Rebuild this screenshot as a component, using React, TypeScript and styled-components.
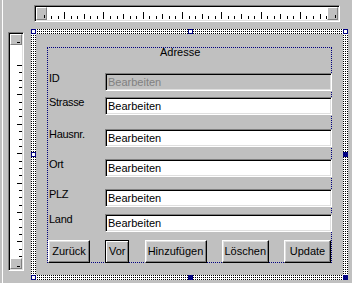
import styled, { createGlobalStyle } from "styled-components";

const GlobalStyle = createGlobalStyle`
  html, body {
    margin: 0;
    padding: 0;
    background: #c0c0c0;
  }
  body {
    font-family: "Liberation Sans", Arial, sans-serif;
    font-size: 11px;
    color: #000;
  }
`;

type Field = { label: string; value: string; top: number; disabled?: boolean };

const fields: Field[] = [
  { label: "ID", value: "Bearbeiten", top: 14, disabled: true },
  { label: "Strasse", value: "Bearbeiten", top: 6 },
  { label: "Hausnr.", value: "Bearbeiten", top: 14 },
  { label: "Ort", value: "Bearbeiten", top: 12 },
  { label: "PLZ", value: "Bearbeiten", top: 12 },
  { label: "Land", value: "Bearbeiten", top: 7 },
];

const buttons = [
  { label: "Zurück", width: 42 },
  { label: "Vor", width: 24, isDefault: true },
  { label: "Hinzufügen", width: 62 },
  { label: "Löschen", width: 47 },
  { label: "Update", width: 47 },
];

const Page = styled.div`
  width: 352px;
  height: 283px;
  overflow: hidden;
  background: linear-gradient(to right, #c0c0c0 2px, #fff 2px, #fff 3px, #c0c0c0 3px);
  display: grid;
  grid-template-columns: 31px 321px;
  grid-template-rows: 29px 254px;
`;

const Corner = styled.div``;

const Ruler = styled.div<{ vertical?: boolean }>`
  position: relative;
  background: #fff;
  border: 1px solid;
  border-color: #808080 #fff #fff #808080;
  box-shadow: inset 1px 1px 0 #000, inset -1px -1px 0 #dfdfdf;
  ${({ vertical }) =>
    vertical
      ? `margin: 3px 7px 0 8px; height: 239px;`
      : `margin: 5px 7px 7px 3px; width: 306px;`}
  box-sizing: border-box;
  overflow: hidden;
`;

const Ticks = styled.svg`
  display: block;
  width: 100%;
  height: 100%;
`;

const Thumb = styled.div<{ vertical?: boolean; end?: boolean }>`
  position: absolute;
  background: #c0c0c0;
  border: 1px solid;
  border-color: #fff #808080 #808080 #fff;
  box-sizing: border-box;
  ${({ vertical, end }) =>
    vertical
      ? `left: 1px; right: 1px; height: 11px; ${end ? "bottom: 1px;" : "top: 1px;"}`
      : `top: 1px; bottom: 1px; width: 11px; ${end ? "right: 1px;" : "left: 1px;"}`}
  &::after {
    content: "";
    position: absolute;
    background: #000;
    ${({ vertical }) =>
      vertical
        ? `right: 1px; bottom: 1px; width: 3px; height: 1px;`
        : `right: 1px; bottom: 1px; width: 1px; height: 3px;`}
  }
`;

const Frame = styled.div`
  position: relative;
  width: 317px;
  height: 251px;
  box-sizing: border-box;
  padding: 5px;
  background-color: #fff;
  background-image: conic-gradient(at 1px 1px, #fff 270deg, #000 0);
  background-size: 2px 2px;
`;

const Handle = styled.div<{ filled?: boolean; x: string; y: string }>`
  position: absolute;
  width: 5px;
  height: 5px;
  box-sizing: border-box;
  border: 1px solid #000080;
  background: ${({ filled }) => (filled ? "#000080" : "#fff")};
  ${({ x }) => x}
  ${({ y }) => y}
`;

const Surface = styled.div`
  height: 100%;
  background: #c0c0c0;
  padding: 13px 11px 12px 11px;
  box-sizing: border-box;
`;

const Section = styled.div`
  height: 216px;
  border: 1px dotted #000080;
  box-sizing: border-box;
  display: flex;
  flex-direction: column;
`;

const Title = styled.div`
  line-height: 13px;
  margin-top: -2px;
  padding-left: 112px;
`;

const Row = styled.div<{ top: number }>`
  display: grid;
  grid-template-columns: 57px 1fr;
  margin-top: ${({ top }) => top}px;
  margin-right: -1px;
  height: 18px;
`;

const Label = styled.div`
  line-height: 13px;
  margin-top: -1px;
  padding-left: 1px;
  letter-spacing: -0.3px;
`;

const TextBox = styled.div<{ disabled?: boolean }>`
  height: 18px;
  box-sizing: border-box;
  border: 1px solid;
  border-color: #808080 #fff #fff #808080;
  box-shadow: inset 1px 1px 0 #000, inset -1px -1px 0 #dfdfdf;
  background: ${({ disabled }) => (disabled ? "#c0c0c0" : "#fff")};
  color: ${({ disabled }) => (disabled ? "#808080" : "#000")};
  padding: 2px 2px 0 2px;
  line-height: 13px;
  white-space: nowrap;
  overflow: hidden;
`;

const ButtonBar = styled.div`
  display: flex;
  justify-content: space-between;
  margin-top: 8px;
  margin-bottom: -1px;
`;

const Button = styled.div<{ w: number; isDefault?: boolean }>`
  position: relative;
  width: ${({ w }) => w}px;
  height: 23px;
  box-sizing: border-box;
  border: 1px solid;
  border-color: ${({ isDefault }) => (isDefault ? "#000" : "#fff #000 #000 #fff")};
  box-shadow: ${({ isDefault }) =>
    isDefault
      ? "inset 1px 1px 0 #fff, inset -1px -1px 0 #808080"
      : "inset -1px -1px 0 #808080, inset 1px 1px 0 #dfdfdf"};
  background: #c0c0c0;
  display: flex;
  align-items: center;
  justify-content: center;
  line-height: 13px;
  white-space: nowrap;
`;

const hTicks = () => {
  const out = [];
  for (let n = 27; n >= -17; n--) {
    const x = 221.3 - 6.55 * n - 35;
    const major = n % 6 === 0;
    const mid = !major && n % 3 === 0;
    const h = major ? 7 : mid ? 5 : 3;
    out.push(<rect key={n} x={Math.round(x)} y={13 - h} width={1} height={h} fill="#000" />);
  }
  return out;
};

const vTicks = () => {
  const out = [];
  for (let n = 0; n < 33; n++) {
    const y = 65 - 33 + 7.35 * n;
    const major = n % 4 === 0;
    const w = major ? 5 : 3;
    out.push(<rect key={n} x={13 - w} y={Math.round(y)} width={w} height={1} fill="#000" />);
  }
  return out;
};

export default function App() {
  return (
    <>
      <GlobalStyle />
      <Page>
        <Corner />
        <Ruler>
          <Ticks viewBox="0 0 304 15">{hTicks()}</Ticks>
          <Thumb />
          <Thumb end />
        </Ruler>
        <Ruler vertical>
          <Ticks viewBox="0 0 14 237">{vTicks()}</Ticks>
          <Thumb vertical />
          <Thumb vertical end />
        </Ruler>
        <Frame>
          <Surface>
            <Section>
              <Title>Adresse</Title>
              {fields.map((f) => (
                <Row key={f.label} top={f.top}>
                  <Label>{f.label}</Label>
                  <TextBox disabled={f.disabled}>{f.value}</TextBox>
                </Row>
              ))}
              <ButtonBar>
                {buttons.map((b) => (
                  <Button key={b.label} w={b.width} isDefault={b.isDefault}>
                    {b.label}
                  </Button>
                ))}
              </ButtonBar>
            </Section>
          </Surface>
          <Handle x="left: 0;" y="top: 0;" />
          <Handle x="left: 157px;" y="top: 0;" />
          <Handle x="right: 0;" y="top: 0;" />
          <Handle x="left: 0;" y="top: 123px;" />
          <Handle filled x="right: 0;" y="top: 123px;" />
          <Handle x="left: 0;" y="bottom: 0;" />
          <Handle filled x="left: 157px;" y="bottom: 0;" />
          <Handle filled x="right: 0;" y="bottom: 0;" />
        </Frame>
      </Page>
    </>
  );
}
